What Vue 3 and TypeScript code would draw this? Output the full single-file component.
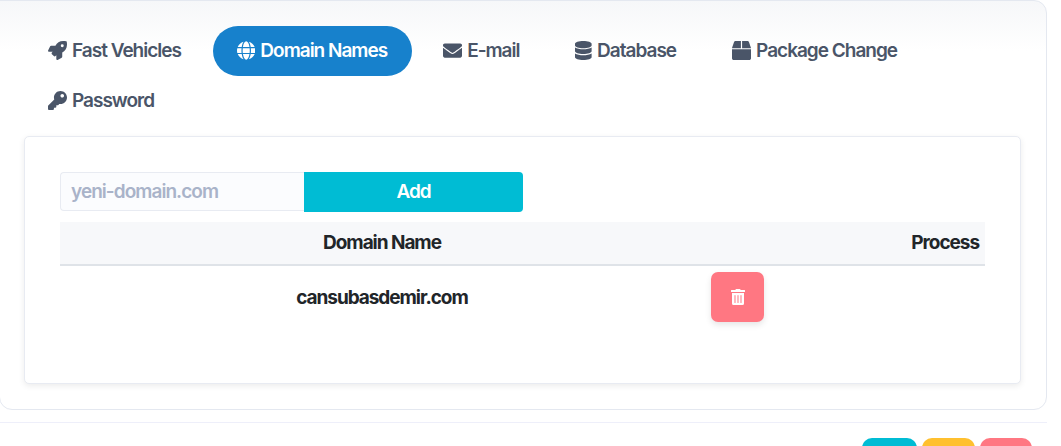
<script setup lang="ts">
interface Tab { label: string; vb: string; d: string; active?: boolean }
const tabs: Tab[] = [
  { label: 'Fast Vehicles', vb: '0 0 512 512', d: 'M505.12019,19.09375c-1.18945-5.53125-6.65819-11-12.207-12.1875C460.716,0,435.507,0,410.40747,0,307.17523,0,245.26909,55.20312,199.05238,128H94.83772c-16.34763.01562-35.55658,11.875-42.88664,26.48438L2.51562,253.29688A28.4,28.4,0,0,0,0,264a24.00867,24.00867,0,0,0,24.00582,24H127.81618l-22.47457,22.46875c-11.36521,11.36133-12.99607,32.25781,0,45.25L156.24582,406.625c11.15623,11.1875,32.15619,13.15625,45.27726,0l22.47457-22.46875V488a24.00867,24.00867,0,0,0,24.00581,24,28.55934,28.55934,0,0,0,10.707-2.51562l98.72834-49.39063c14.62888-7.29687,26.50776-26.5,26.50776-42.85937V312.79688c72.59753-46.3125,128.03493-108.40626,128.03493-211.09376C512.07526,76.5,512.07526,51.29688,505.12019,19.09375ZM384.04033,168A40,40,0,1,1,424.05,128,40.02322,40.02322,0,0,1,384.04033,168Z' },
  { label: 'Domain Names', active: true, vb: '0 0 496 512', d: 'M336.5 160C322 70.7 287.8 8 248 8s-74 62.7-88.5 152h177zM152 256c0 22.2 1.2 43.5 3.3 64h185.3c2.1-20.5 3.3-41.8 3.3-64s-1.2-43.5-3.3-64H155.3c-2.1 20.5-3.3 41.8-3.3 64zm324.7-96c-28.6-67.9-86.5-120.4-158-141.6 24.4 33.8 41.2 84.7 50 141.6h108zM177.2 18.4C105.8 39.6 47.8 92.1 19.3 160h108c8.7-56.9 25.5-107.8 49.9-141.6zM487.4 192H372.7c2.1 21 3.3 42.5 3.3 64s-1.2 43-3.3 64h114.6c5.5-20.5 8.6-41.8 8.6-64s-3.1-43.5-8.5-64zM120 256c0-21.5 1.2-43 3.3-64H8.6C3.2 212.5 0 233.8 0 256s3.2 43.5 8.6 64h114.6c-2-21-3.2-42.5-3.2-64zm39.5 96c14.5 89.3 48.7 152 88.5 152s74-62.7 88.5-152h-177zm159.3 141.6c71.4-21.2 129.4-73.7 158-141.6h-108c-8.8 56.9-25.6 107.8-50 141.6zM19.3 352c28.6 67.9 86.5 120.4 158 141.6-24.4-33.8-41.2-84.7-50-141.6h-108z' },
  { label: 'E-mail', vb: '0 0 512 512', d: 'M502.3 190.8c3.9-3.1 9.7-.2 9.7 4.7V400c0 26.5-21.5 48-48 48H48c-26.5 0-48-21.5-48-48V195.6c0-5 5.7-7.8 9.7-4.7 22.4 17.4 52.1 39.5 154.1 113.6 21.1 15.4 56.7 47.8 92.2 47.6 35.7.3 72-32.8 92.3-47.6 102-74.1 131.6-96.3 154-113.7zM256 320c23.2.4 56.6-29.2 73.4-41.4 132.7-96.3 142.8-104.7 173.4-128.7 5.8-4.5 9.2-11.5 9.2-18.9v-19c0-26.5-21.5-48-48-48H48C21.5 64 0 85.5 0 112v19c0 7.4 3.4 14.3 9.2 18.9 30.6 23.9 40.7 32.4 173.4 128.7 16.8 12.2 50.2 41.8 73.4 41.4z' },
  { label: 'Database', vb: '0 0 448 512', d: 'M448 73.143v45.714C448 159.143 347.667 192 224 192S0 159.143 0 118.857V73.143C0 32.857 100.333 0 224 0s224 32.857 224 73.143zM448 176v102.857C448 319.143 347.667 352 224 352S0 319.143 0 278.857V176c48.125 33.143 136.208 48.572 224 48.572S399.874 209.143 448 176zm0 160v102.857C448 479.143 347.667 512 224 512S0 479.143 0 438.857V336c48.125 33.143 136.208 48.572 224 48.572S399.874 369.143 448 336z' },
  { label: 'Package Change', vb: '0 0 512 512', d: 'M509.5 184.6L458.9 32.8C452.4 13.2 434.1 0 413.4 0H272v192h238.7c-.4-2.5-.4-5-1.2-7.4zM240 0H98.6c-20.7 0-39 13.2-45.5 32.8L2.5 184.6c-.8 2.4-.8 4.9-1.2 7.4H240V0zM0 224v240c0 26.5 21.5 48 48 48h416c26.5 0 48-21.5 48-48V224H0z' },
  { label: 'Password', vb: '0 0 512 512', d: 'M512 176.001C512 273.203 433.202 352 336 352c-11.22 0-22.19-1.062-32.827-3.069l-24.012 27.014A23.999 23.999 0 0 1 261.223 384H224v40c0 13.255-10.745 24-24 24h-40v40c0 13.255-10.745 24-24 24H24c-13.255 0-24-10.745-24-24v-78.059c0-6.365 2.529-12.47 7.029-16.971l161.802-161.802C163.108 213.814 160 195.271 160 176 160 78.798 238.797.001 335.999 0 433.488-.001 512 78.511 512 176.001zM336 128c0 26.51 21.49 48 48 48s48-21.49 48-48-21.49-48-48-48-48 21.49-48 48z' }
]
const trash = 'M32 464a48 48 0 0 0 48 48h288a48 48 0 0 0 48-48V128H32zm272-256a16 16 0 0 1 32 0v224a16 16 0 0 1-32 0zm-96 0a16 16 0 0 1 32 0v224a16 16 0 0 1-32 0zm-96 0a16 16 0 0 1 32 0v224a16 16 0 0 1-32 0zM432 32H312l-9.4-18.7A24 24 0 0 0 281.1 0H166.8a23.72 23.72 0 0 0-21.4 13.3L136 32H16A16 16 0 0 0 0 48v32a16 16 0 0 0 16 16h416a16 16 0 0 0 16-16V48a16 16 0 0 0-16-16z'
</script>

<template>
  <div class="page">
    <section class="panel">
      <nav class="tabs">
        <a v-for="t in tabs" :key="t.label" class="tab" :class="{ active: t.active }">
          <svg class="ico" :viewBox="t.vb" aria-hidden="true"><path fill="currentColor" :d="t.d" /></svg>
          <span>{{ t.label }}</span>
        </a>
      </nav>
      <div class="card">
        <div class="add-row">
          <input class="domain-input" placeholder="yeni-domain.com" />
          <button class="add-btn">Add</button>
        </div>
        <table class="tbl">
          <thead>
            <tr>
              <th class="c1">Domain Name</th>
              <th class="c2">Process</th>
            </tr>
          </thead>
          <tbody>
            <tr>
              <td class="c1">cansubasdemir.com</td>
              <td class="c2-cell">
                <button class="del" aria-label="Delete">
                  <svg class="trash" viewBox="0 0 448 512" aria-hidden="true"><path fill="currentColor" :d="trash" /></svg>
                </button>
              </td>
            </tr>
          </tbody>
        </table>
      </div>
    </section>
    <footer class="foot">
      <button class="fb cyan"></button>
      <button class="fb amber"></button>
      <button class="fb rose"></button>
    </footer>
  </div>
</template>

<style>
html, body { margin: 0; padding: 0; background: #fff; overflow: hidden; }
</style>

<style scoped>
.page {
  width: 1061px;
  height: 446px;
  overflow: hidden;
  font-family: Inter, "Liberation Sans", sans-serif;
  background: #fff;
}
.panel {
  box-sizing: border-box;
  width: 1048px;
  height: 410px;
  margin-left: -1px;
  padding: 25px 25px 0 24px;
  border: 1px solid #e4e8f0;
  border-radius: 0 13px 13px 13px;
  background: linear-gradient(#f6f7f9 0, #fff 50px);
}
.tabs {
  display: flex;
  flex-wrap: wrap;
  gap: 0 7px;
}
.tab {
  display: flex;
  align-items: center;
  height: 50px;
  padding: 0 25px 2px 24px;
  box-sizing: border-box;
  border-radius: 25px;
  font-size: 19px;
  font-weight: 600;
  letter-spacing: -1px;
  color: #4a5568;
}
.tab.active { background: #1781cc; color: #fff; }
.ico { width: auto; height: 19px; margin-right: 5px; flex: none; }
.card {
  box-sizing: border-box;
  width: 997px;
  height: 248px;
  margin-top: 10px;
  padding: 35px;
  border: 1px solid #e8ebf2;
  border-radius: 5px;
  background: #fff;
  box-shadow: 0 2px 6px rgba(0, 0, 0, 0.08);
}
.add-row { display: flex; align-items: flex-start; height: 40px; }
.domain-input {
  box-sizing: border-box;
  width: 244px;
  height: 39px;
  padding: 0 10px;
  border: 1px solid #e8ebf2;
  border-right: 0;
  border-radius: 4px 0 0 4px;
  background: #fbfcfe;
  font: 600 19px Inter, sans-serif;
  letter-spacing: -0.95px;
  outline: none;
}
.domain-input::placeholder { color: #a9b3c9; opacity: 1; }
.add-btn {
  width: 219px;
  height: 40px;
  padding: 0 0 2px;
  border: 0;
  border-radius: 0 4px 4px 0;
  background: #00bcd4;
  color: #fff;
  font: 600 19px Inter, sans-serif;
  letter-spacing: -1px;
}
.tbl {
  width: 925px;
  margin-top: 10px;
  border-collapse: collapse;
  table-layout: fixed;
  color: #212529;
  font-size: 19px;
  font-weight: 700;
  letter-spacing: -1.05px;
}
.tbl th { height: 43px; padding: 0 6px 2px 5px; box-sizing: border-box; background: #f7f8fa; border-bottom: 2px solid #dfe3e8; font-weight: 700; }
.tbl th.c1, .tbl td.c1 { width: 644px; text-align: center; }
.tbl th.c1 { padding: 0 0 2px; }
.tbl th.c2 { text-align: right; }
.tbl td { padding: 6px 6px 6px 7px; vertical-align: top; }
.tbl td.c1 { padding: 20px 0 0; line-height: 23px; }
.del {
  display: flex;
  align-items: center;
  justify-content: center;
  width: 53px;
  height: 50px;
  padding: 0 0 1px;
  border: 0;
  border-radius: 7px;
  background: #ff7782;
  color: #fff;
  box-shadow: 0 3px 6px rgba(0, 0, 0, 0.1);
}
.trash { width: 14px; height: 16px; }
.foot {
  display: flex;
  gap: 5px;
  box-sizing: border-box;
  width: 1047px;
  height: 36px;
  margin-top: 12px;
  padding: 15px 15px 0 0;
  justify-content: flex-end;
  border-top: 1px solid #eeeffa;
}
.fb { height: 40px; border: 0; border-radius: 10px; padding: 0; }
.cyan { width: 55px; background: #00bcd4; }
.amber { width: 53px; background: #ffc02f; }
.rose { width: 52px; background: #ff7782; }
</style>
